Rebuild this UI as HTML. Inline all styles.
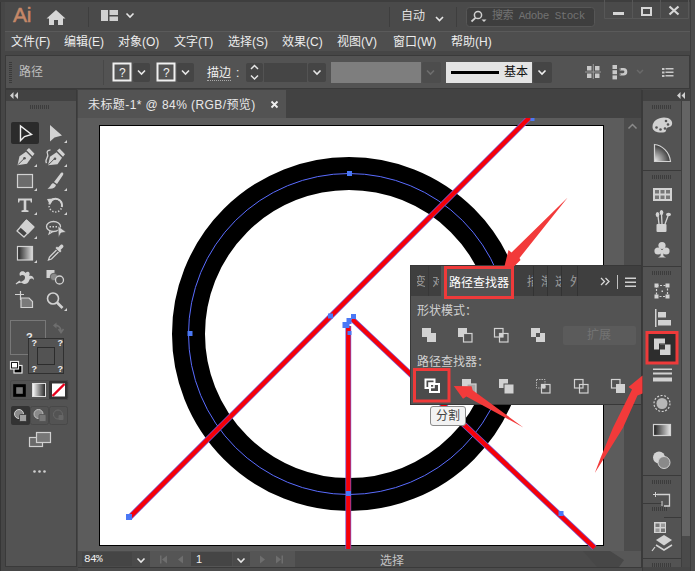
<!DOCTYPE html>
<html><head><meta charset="utf-8">
<style>
html,body{margin:0;padding:0;}
body{width:695px;height:571px;overflow:hidden;background:#535353;position:relative;font-family:"Liberation Sans","Noto Sans CJK SC",sans-serif;font-size:12px;color:#e6e6e6;}
.abs{position:absolute;}
.t{position:absolute;white-space:nowrap;line-height:1;}
svg{position:absolute;left:0;top:0;}
.dd{position:absolute;background:#474747;border-radius:2px;}
</style></head><body>

<div class="abs" style="left:0;top:0;width:695px;height:571px;background:#464646;"></div>
<div class="abs" style="left:0;top:0;width:1px;height:571px;background:#363636;"></div>
<div class="abs" style="left:0;top:0;width:695px;height:2px;background:#3e3e3e;"></div>
<div class="abs" id="topbar" style="left:5px;top:2px;width:685px;height:29px;background:#4a4a4a;"></div>
<div class="abs" style="left:5px;top:31px;width:685px;height:1px;background:#5a5a5a;"></div>
<div class="abs" id="menubar" style="left:5px;top:32px;width:685px;height:19px;background:#4e4e4e;"></div>
<div class="abs" id="ctrlbar" style="left:5px;top:55px;width:685px;height:34px;background:#535353;border:1px solid #3a3a3a;box-sizing:border-box;"></div>
<div class="abs" id="tabstrip" style="left:77px;top:89px;width:565px;height:29px;background:#424242;"></div>
<div class="abs" id="tab" style="left:78px;top:90px;width:208px;height:28px;background:#535353;"></div>
<div class="abs" id="lt-border" style="left:5px;top:89px;width:72px;height:478px;background:#3a3a3a;"></div>
<div class="abs" id="lt-head" style="left:6px;top:90px;width:70px;height:11px;background:#424242;"></div>
<div class="abs" id="lt" style="left:6px;top:101px;width:70px;height:465px;background:#535353;"></div>
<div class="abs" id="paste" style="left:78px;top:118px;width:546px;height:433px;background:#5c5c5c;"></div>
<div class="abs" id="art" style="left:99px;top:125px;width:505px;height:421px;background:#fff;border:1px solid #000;box-sizing:border-box;"></div>
<div class="abs" id="vscroll" style="left:624px;top:118px;width:17px;height:433px;background:#4c4c4c;"></div>
<div class="abs" id="status" style="left:78px;top:551px;width:564px;height:16px;background:#4b4b4b;"></div><div class="abs" style="left:150px;top:551px;width:145px;height:16px;background:#555;"></div><div class="abs" style="left:600px;top:551px;width:41px;height:16px;background:#575757;"></div>
<div class="abs" id="rd-head" style="left:643px;top:90px;width:47px;height:11px;background:#424242;"></div>
<div class="abs" id="rd" style="left:643px;top:101px;width:38px;height:466px;background:#535353;"></div>
<div class="abs" id="rd2" style="left:682px;top:101px;width:8px;height:435px;background:#646464;"></div>
<div class="abs" id="rd3" style="left:682px;top:536px;width:8px;height:31px;background:#4a4a4a;"></div>
<div class="abs" style="left:681px;top:101px;width:1px;height:466px;background:#3e3e3e;"></div>
<div class="abs" style="left:690px;top:0px;width:1px;height:571px;background:#3c3c3c;"></div>
<div class="abs" style="left:691px;top:0px;width:4px;height:571px;background:#4c4c4c;"></div>

<div class="t" style="left:13px;top:4px;font-size:21px;color:#c58868;letter-spacing:-0.3px;-webkit-text-stroke:0.5px #c58868;">Ai</div>
<svg width="695" height="60" viewBox="0 0 695 60">
 <!-- home -->
 <path d="M56 10 L46.5 18.5 L49 18.5 L49 25 L54 25 L54 20 L58 20 L58 25 L63 25 L63 18.5 L65.5 18.5 Z" fill="#d6d6d6"/>
 <rect x="88" y="7" width="1" height="20" fill="#3e3e3e"/>
 <!-- layout -->
 <rect x="101" y="10" width="7" height="11" fill="#d0d0d0"/><rect x="109.5" y="10" width="8.5" height="5" fill="#d0d0d0"/><rect x="109.5" y="16.5" width="8.5" height="4.5" fill="#d0d0d0"/>
 <path d="M126.5 13.5 L130 17 L133.5 13.5" fill="none" stroke="#e6e6e6" stroke-width="1.6"/>
 <rect x="389" y="7" width="1" height="20" fill="#3e3e3e"/>
 <path d="M436 17 L439.5 20.5 L443 17" fill="none" stroke="#e6e6e6" stroke-width="1.6"/>
 <rect x="456" y="7" width="1" height="20" fill="#3e3e3e"/>
 <rect x="466.500" y="7.500" width="128" height="19" rx="3" fill="#3e3e3e" stroke="#565656"/>
 <circle cx="478" cy="15" r="3.6" fill="none" stroke="#d0d0d0" stroke-width="1.5"/>
 <path d="M475.500 17.800 L471.500 21.500" stroke="#d0d0d0" stroke-width="1.8"/>
 <path d="M481.500 19.500 L486.500 19.500 L484 22 Z" fill="#d0d0d0"/>
 <!-- window controls -->
 <path d="M604.500 0 V18.500 H688.500 V0 M632.500 0 V18.500 M660.500 0 V18.500" fill="none" stroke="#575757"/>
 <rect x="613" y="12" width="11" height="3" fill="#d6d6d6"/>
 <rect x="642" y="8" width="9" height="7" fill="none" stroke="#d6d6d6" stroke-width="2"/>
 <path d="M669.500 6.500 L678.500 14.500 M678.500 6.500 L669.500 14.500" stroke="#d6d6d6" stroke-width="2.2"/>
</svg>
<div class="t" style="left:401px;top:10px;font-size:12px;color:#e0e0e0;">自动</div>
<div class="t" style="left:492px;top:11px;font-size:11px;color:#727272;font-family:'Liberation Mono','Noto Sans CJK SC',monospace;letter-spacing:-0.6px;">搜索 Adobe Stock</div>
<div class="t" style="left:11px;top:36px;font-size:12px;color:#ececec;">文件(F)</div><div class="t" style="left:64px;top:36px;font-size:12px;color:#ececec;">编辑(E)</div><div class="t" style="left:118px;top:36px;font-size:12px;color:#ececec;">对象(O)</div><div class="t" style="left:174px;top:36px;font-size:12px;color:#ececec;">文字(T)</div><div class="t" style="left:228px;top:36px;font-size:12px;color:#ececec;">选择(S)</div><div class="t" style="left:282px;top:36px;font-size:12px;color:#ececec;">效果(C)</div><div class="t" style="left:337px;top:36px;font-size:12px;color:#ececec;">视图(V)</div><div class="t" style="left:393px;top:36px;font-size:12px;color:#ececec;">窗口(W)</div><div class="t" style="left:451px;top:36px;font-size:12px;color:#ececec;">帮助(H)</div>
<svg width="695" height="95" viewBox="0 0 695 95">
 <rect x="9" y="62" width="3" height="1" fill="#3a3a3a"/><rect x="9" y="64" width="3" height="1" fill="#3a3a3a"/><rect x="9" y="66" width="3" height="1" fill="#3a3a3a"/><rect x="9" y="68" width="3" height="1" fill="#3a3a3a"/><rect x="9" y="70" width="3" height="1" fill="#3a3a3a"/><rect x="9" y="72" width="3" height="1" fill="#3a3a3a"/><rect x="9" y="74" width="3" height="1" fill="#3a3a3a"/><rect x="9" y="76" width="3" height="1" fill="#3a3a3a"/><rect x="9" y="78" width="3" height="1" fill="#3a3a3a"/><rect x="9" y="80" width="3" height="1" fill="#3a3a3a"/><rect x="9" y="82" width="3" height="1" fill="#3a3a3a"/>
 <rect x="103" y="60" width="1" height="25" fill="#484848"/>
 <!-- ? boxes -->
 <rect x="113.500" y="63.500" width="17" height="17" fill="#535353" stroke="#f0f0f0" stroke-width="2"/>
 <rect x="133" y="63" width="17" height="19" rx="2" fill="#454545"/>
 <path d="M138 70.500 L141.500 74 L145 70.500" fill="none" stroke="#e6e6e6" stroke-width="1.6"/>
 <rect x="157.500" y="63.500" width="17" height="17" fill="#535353" stroke="#f0f0f0" stroke-width="2"/>
 <rect x="177" y="63" width="17" height="19" rx="2" fill="#454545"/>
 <path d="M182 70.500 L185.500 74 L189 70.500" fill="none" stroke="#e6e6e6" stroke-width="1.6"/>
 <!-- stroke weight -->
 <rect x="246" y="63" width="17" height="19" rx="2" fill="#454545"/>
 <path d="M251 69 L254.500 65.500 L258 69 M251 75.500 L254.500 79 L258 75.500" fill="none" stroke="#e6e6e6" stroke-width="1.5"/>
 <rect x="264" y="63" width="43" height="19" fill="#454545"/>
 <rect x="308" y="63" width="18" height="19" rx="2" fill="#454545"/>
 <path d="M313.500 70.500 L317 74 L320.500 70.500" fill="none" stroke="#e6e6e6" stroke-width="1.6"/>
 <!-- var width profile -->
 <rect x="331" y="62" width="90" height="21" fill="#7e7e7e"/>
 <rect x="422" y="62" width="19" height="21" rx="2" fill="#4d4d4d"/>
 <path d="M427 70.500 L430.500 74 L434 70.500" fill="none" stroke="#6e6e6e" stroke-width="1.6"/>
 <!-- brush def -->
 <rect x="446" y="62" width="86" height="21" fill="#e4e4e4"/>
 <rect x="451" y="71" width="48" height="3" fill="#000"/>
 <rect x="533" y="62" width="19" height="21" rx="2" fill="#454545"/>
 <path d="M538.500 70.500 L542 74 L545.500 70.500" fill="none" stroke="#f0f0f0" stroke-width="1.6"/>
 <!-- right icons -->
 <g fill="#c8c8c8">
  <rect x="587" y="66" width="4.500" height="4.500"/><rect x="595" y="66" width="4.500" height="4.500"/><rect x="587" y="73.500" width="4.500" height="4.500"/><rect x="595" y="73.500" width="4.500" height="4.500"/>
  <rect x="592.800" y="64" width="1" height="15" fill="#9a9a9a"/><rect x="585" y="71.500" width="16" height="1" fill="#9a9a9a"/>
  <rect x="612.500" y="65" width="4.500" height="4"/><rect x="612.500" y="70.200" width="4.500" height="4"/><rect x="612.500" y="75.400" width="4.500" height="4"/>
  <path d="M620 68 H623.500 A3.700 3.700 0 0 1 623.500 75.600 H620 V73.200 H623 A1.300 1.300 0 0 0 623 70.400 H620 Z"/><rect x="619.500" y="68" width="1.500" height="2.400" fill="#8a8a8a"/><rect x="619.500" y="73.200" width="1.500" height="2.400" fill="#8a8a8a"/>
  <rect x="662" y="68" width="2.500" height="2"/><rect x="662" y="71.500" width="2.500" height="2"/><rect x="662" y="75" width="2.500" height="2"/>
  <rect x="665.500" y="68" width="8" height="1.500"/><rect x="665.500" y="71.500" width="8" height="1.500"/><rect x="665.500" y="75" width="8" height="1.500"/>
 </g>
 <path d="M637 70 L640 73 L643 70" fill="none" stroke="#6a6a6a" stroke-width="1.5"/>
</svg>
<div class="t" style="left:19px;top:66px;font-size:12px;color:#bdbdbd;">路径</div>
<div class="t" style="left:119px;top:67px;font-size:12px;color:#f0f0f0;">?</div>
<div class="t" style="left:163px;top:67px;font-size:12px;color:#f0f0f0;">?</div>
<div class="t" style="left:207px;top:67px;font-size:12px;color:#f0f0f0;border-bottom:1px dotted #aaa;padding-bottom:1px;">描边</div>
<div class="t" style="left:236px;top:67px;font-size:12px;color:#f0f0f0;">:</div>
<div class="t" style="left:504px;top:66px;font-size:12px;color:#111;">基本</div>

<div class="t" style="left:88px;top:99px;font-size:12px;color:#e8e8e8;letter-spacing:0.42px;">未标题-1* @ 84% (RGB/预览)</div>
<svg width="695" height="130" viewBox="0 0 695 130">
 <path d="M271.500 101.500 L277.500 107.500 M277.500 101.500 L271.500 107.500" stroke="#f0f0f0" stroke-width="1.8"/>
 <path d="M13.500 92 L10 95.500 L13.500 99 Z M18 92 L14.500 95.500 L18 99 Z" fill="#d0d0d0"/>
 <path d="M680.500 92 L677 95.500 L680.500 99 Z M685 92 L681.500 95.500 L685 99 Z" fill="#d0d0d0"/>
</svg>

<svg width="695" height="571" viewBox="0 0 695 571">
 <defs><clipPath id="cv"><rect x="78" y="118" width="546" height="433"/></clipPath></defs>
 <g clip-path="url(#cv)">
  <circle cx="349" cy="334" r="160.500" fill="none" stroke="#000" stroke-width="33"/>
  <circle cx="349" cy="334" r="160.500" fill="none" stroke="#5a6cff" stroke-width="1"/>
  <g stroke="#7a55d0" stroke-width="5.800">
   <line x1="129" y1="518" x2="531" y2="116"/>
   <line x1="348.300" y1="326" x2="348.300" y2="549"/>
   <line x1="352" y1="319" x2="594.500" y2="547.700"/>
  </g>
  <g stroke="#f60008" stroke-width="4.300">
   <line x1="129" y1="518" x2="531" y2="116"/>
   <line x1="348.300" y1="326" x2="348.300" y2="549"/>
   <line x1="352" y1="319" x2="594.500" y2="547.700"/>
  </g>
  <g fill="#4a78f5">
   <rect x="126" y="514" width="6" height="6"/><rect x="530.500" y="118" width="4" height="3"/>
   <rect x="328" y="313.500" width="5" height="5"/>
   <rect x="342.500" y="322" width="7" height="6"/>
   <rect x="346.500" y="318" width="5" height="6"/>
   <rect x="351" y="314" width="5" height="5"/>
   <rect x="347.500" y="331" width="4" height="4"/>
   <rect x="346" y="491" width="5" height="5"/>
   <rect x="187.500" y="331" width="5" height="5"/>
   <rect x="347" y="171" width="5" height="5"/>
   <rect x="558.500" y="511" width="5" height="5"/>
  </g>
 </g>
 <!-- scroll arrow -->
 <path d="M628.500 128.500 L632.500 124.500 L636.500 128.500" fill="none" stroke="#8a8a8a" stroke-width="1.5"/>
</svg>
<svg width="80" height="571" viewBox="0 0 80 571"><rect x="30" y="105" width="1" height="4" fill="#3c3c3c"/><rect x="32" y="105" width="1" height="4" fill="#3c3c3c"/><rect x="34" y="105" width="1" height="4" fill="#3c3c3c"/><rect x="36" y="105" width="1" height="4" fill="#3c3c3c"/><rect x="38" y="105" width="1" height="4" fill="#3c3c3c"/><rect x="40" y="105" width="1" height="4" fill="#3c3c3c"/><rect x="42" y="105" width="1" height="4" fill="#3c3c3c"/><rect x="44" y="105" width="1" height="4" fill="#3c3c3c"/><rect x="46" y="105" width="1" height="4" fill="#3c3c3c"/><rect x="48" y="105" width="1" height="4" fill="#3c3c3c"/><rect x="11" y="122" width="28" height="22" rx="2" fill="#2b2b2b"/><path d="M20.500 126 L20.500 140.500 L24.500 136.500 L31.500 134.500 Z" fill="none" stroke="#f0f0f0" stroke-width="1.400" stroke-linejoin="miter"/><path d="M50 125 L50 141.500 L54.500 137.500 L62 135.500 Z" fill="#d2d2d2"/><path d="M67 143 L67 140 L64 143 Z" fill="#d2d2d2"/><g transform="translate(0,1.200)"><path d="M17.500 164 L19.500 155 L26 150.500 L31.500 156 L27 162.500 Z" fill="#d2d2d2"/><path d="M26.500 149 L29 146.800 L34.500 152.500 L32.500 155 Z" fill="#d2d2d2"/><path d="M18 163.500 L24 157.500" stroke="#535353" stroke-width="1"/><circle cx="24.500" cy="157" r="1.300" fill="#535353"/></g><path d="M37 167 L37 164 L34 167 Z" fill="#d2d2d2"/><g transform="translate(0,1.200)"><path d="M48 164 L50 155.500 L56.500 151 L62 156.500 L57.500 163 Z" fill="#d2d2d2"/><path d="M57 149.500 L59.500 147.300 L65 153 L63 155.500 Z" fill="#d2d2d2"/><path d="M48.500 163.500 L54.500 157.500" stroke="#535353" stroke-width="1"/><circle cx="55" cy="157.500" r="1.300" fill="#535353"/><path d="M46.500 162 C44 158 49.500 156 47.500 152.500 C46 150 49 148.500 50.500 149" fill="none" stroke="#d2d2d2" stroke-width="1.300"/></g><path d="M67 167 L67 164 L64 167 Z" fill="#d2d2d2"/><rect x="17.500" y="174.500" width="15" height="13" fill="#6c6c6c" stroke="#d2d2d2" stroke-width="1.200"/><path d="M37 191 L37 188 L34 191 Z" fill="#d2d2d2"/><path d="M62.500 172.500 C63.500 173 63.500 174 63 175 L57 184 L54 182 L60.500 173.500 C61 172.500 62 172.300 62.500 172.500 Z" fill="#d2d2d2"/><path d="M53 183 L56 185 C55.500 188 52 189.500 47.500 188.500 C50 187.500 50.500 184.500 53 183 Z" fill="#d2d2d2"/><path d="M67 191 L67 188 L64 191 Z" fill="#d2d2d2"/><path d="M18 198.500 H32 V202.500 H30.800 L30.300 200.500 H26.300 V210 L28.500 210.600 V212 H21.500 V210.600 L23.700 210 V200.500 H19.700 L19.200 202.500 H18 Z" fill="#d2d2d2"/><path d="M37 215 L37 212 L34 215 Z" fill="#d2d2d2"/><circle cx="55.500" cy="205.500" r="6.500" fill="none" stroke="#d2d2d2" stroke-width="1.500" stroke-dasharray="1.300 1.700"/><path d="M49.600 202.600 A6.500 6.500 0 0 1 61.800 207" fill="none" stroke="#d2d2d2" stroke-width="2"/><path d="M47 199 L54 198.500 L50 205 Z" fill="#d2d2d2"/><path d="M67 215 L67 212 L64 215 Z" fill="#d2d2d2"/><path d="M26.500 220.300 L33.800 227 L24 237 L17 231 Z" fill="#444" stroke="#d2d2d2" stroke-width="1.300" stroke-linejoin="round"/><path d="M26.500 220.300 L33.800 227 L27.800 233.200 L20.500 226.800 Z" fill="#d2d2d2" stroke="#d2d2d2" stroke-width="1.300" stroke-linejoin="round"/><path d="M37 239 L37 236 L34 239 Z" fill="#d2d2d2"/><ellipse cx="53.500" cy="226.500" rx="7" ry="5" fill="none" stroke="#d2d2d2" stroke-width="1.300"/><path d="M50 231 L49 234 L53 231.500" fill="none" stroke="#d2d2d2" stroke-width="1.100"/><rect x="49.500" y="226" width="1.500" height="1.500" fill="#d2d2d2"/><rect x="52.500" y="226" width="1.500" height="1.500" fill="#d2d2d2"/><rect x="55.500" y="226" width="1.500" height="1.500" fill="#d2d2d2"/><path d="M58 226 L66 232 L61 233 L58.500 237.500 Z" fill="#d2d2d2" stroke="#535353" stroke-width="0.600"/><defs><linearGradient id="g1" x1="0" x2="1"><stop offset="0" stop-color="#222"/><stop offset="1" stop-color="#ddd"/></linearGradient></defs><rect x="17.500" y="246.500" width="15" height="13.500" fill="url(#g1)" stroke="#d2d2d2" stroke-width="1.200"/><path d="M37 263 L37 260 L34 263 Z" fill="#d2d2d2"/><path d="M60.500 245 C62 243.500 64.500 246 63 247.500 L60.500 250 L61.500 251 L60 252.500 L55.500 248 L57 246.500 L58 247.500 Z" fill="#d2d2d2"/><path d="M56.500 250 L49.500 257 L48.500 260 L51.500 259 L58.500 252" fill="none" stroke="#d2d2d2" stroke-width="1.300"/><path d="M17 283 C20 279 24 283 25 278 C25.500 275 22 274 20 276 C18 271 24 270 25.500 273 C28 270 31 273 29 276 C32 275 34 277 34 280 C32 278 30 278 29 281 C28 284 24 285 22 283 C20 282 19 284 17 283 Z" fill="#d2d2d2"/><circle cx="21" cy="280" r="1.800" fill="#535353"/><path d="M16 284 L20 281" stroke="#d2d2d2" stroke-width="1.200"/><rect x="46.500" y="270" width="8" height="8" fill="#d2d2d2"/><circle cx="54" cy="277" r="3.800" fill="#8a8a8a" stroke="#535353" stroke-width="0.800"/><circle cx="59.500" cy="280" r="4" fill="#535353" stroke="#d2d2d2" stroke-width="1.300"/><path d="M20.500 291 V300 M15 294.500 H24" stroke="#d2d2d2" stroke-width="1.200" fill="none"/><path d="M21 298 H29 L32.500 301.500 V307.500 H21 Z" fill="#7a7a7a" stroke="#d2d2d2" stroke-width="1.200"/><circle cx="53" cy="298.500" r="5.500" fill="none" stroke="#d2d2d2" stroke-width="1.600"/><path d="M57 302.500 L62.500 308" stroke="#d2d2d2" stroke-width="2.600"/><path d="M67 311 L67 308 L64 311 Z" fill="#d2d2d2"/><rect x="10.500" y="320.500" width="35" height="34" fill="#535353" stroke="#787878"/><rect x="28.500" y="338.500" width="35" height="35" fill="#535353" stroke="#303030"/><rect x="37.500" y="347.500" width="17" height="17" fill="#535353" stroke="#2c2c2c"/><path d="M54 325.500 C58 325 61 327 61 331 M58.500 329 L61 332.500 L63.500 329" fill="none" stroke="#6e6e6e" stroke-width="1.600"/><path d="M56.500 322.500 L53 325.500 L56.500 328.500 Z" fill="#6e6e6e"/><rect x="14" y="365.500" width="8" height="7.500" fill="#000" stroke="#e8e8e8" stroke-width="1.200"/><rect x="10.500" y="361.500" width="8" height="7.500" fill="#000" stroke="#e8e8e8" stroke-width="1.200"/><rect x="12" y="363" width="5" height="4.500" fill="#fff"/><rect x="49" y="380" width="19" height="20" rx="2" fill="#333"/><rect x="14.700" y="385.700" width="9.600" height="9.600" fill="#777" stroke="#000" stroke-width="3"/><rect x="10.500" y="380.500" width="57.500" height="19" rx="2" fill="none" stroke="#4a4a4a" stroke-width="1"/><defs><linearGradient id="g2" x1="0" x2="1"><stop offset="0" stop-color="#fff"/><stop offset="1" stop-color="#222"/></linearGradient></defs><rect x="32.500" y="383.500" width="13" height="13" fill="url(#g2)" stroke="#ddd"/><rect x="52" y="383.500" width="13" height="13" fill="#fff"/><path d="M52.500 396 L64.500 384" stroke="#e8001c" stroke-width="2.400"/><rect x="11" y="406" width="19" height="19" rx="2" fill="#333"/><rect x="30.500" y="406.500" width="18" height="18" rx="2" fill="none" stroke="#484848"/><rect x="49.500" y="406.500" width="18" height="18" rx="2" fill="none" stroke="#484848"/><circle cx="19" cy="414" r="4.500" fill="#8a8a8a" stroke="#d0d0d0"/><rect x="19.500" y="414.500" width="7" height="7" rx="1" fill="#a0a0a0" stroke="#333" stroke-width="0.800"/><circle cx="38.500" cy="414" r="4.500" fill="#8a8a8a" stroke="#c0c0c0"/><rect x="39" y="414.500" width="7" height="7" rx="1" fill="#777" stroke="#535353" stroke-width="0.800"/><circle cx="58" cy="414.500" r="4.500" fill="none" stroke="#686868"/><rect x="58.500" y="415" width="5" height="5" rx="1" fill="#666"/><rect x="29.500" y="437.500" width="13" height="9" fill="#6a6a6a" stroke="#d0d0d0" stroke-width="1.200"/><rect x="36.500" y="432.500" width="14" height="10" fill="#777" stroke="#d0d0d0" stroke-width="1.200"/><circle cx="34.500" cy="471.500" r="1.300" fill="#d0d0d0"/><circle cx="39.500" cy="471.500" r="1.300" fill="#d0d0d0"/><circle cx="44.500" cy="471.500" r="1.300" fill="#d0d0d0"/></svg><div class="abs" style="left:24px;top:330px;width:10px;height:8px;overflow:hidden;"><div class="t" style="left:2px;top:2px;font-size:11px;font-weight:bold;color:#e8e8e8;">?</div></div><div class="t" style="left:31.5px;top:339px;font-size:9px;font-weight:bold;color:#ececec;">?</div><div class="t" style="left:57.5px;top:339px;font-size:9px;font-weight:bold;color:#ececec;">?</div><div class="t" style="left:31.5px;top:364.5px;font-size:9px;font-weight:bold;color:#ececec;">?</div><div class="t" style="left:57.5px;top:364.5px;font-size:9px;font-weight:bold;color:#ececec;">?</div><svg width="695" height="571" viewBox="0 0 695 571"><defs><linearGradient id="g3" x1="0" x2="1"><stop offset="0" stop-color="#1a1a1a"/><stop offset="1" stop-color="#e8e8e8"/></linearGradient><radialGradient id="g4" cx="0" cy="1" r="1.1"><stop offset="0" stop-color="#f0f0f0"/><stop offset="0.500" stop-color="#888"/><stop offset="1" stop-color="#222"/></radialGradient></defs><rect x="641" y="90" width="2" height="481" fill="#3a3a3a"/><rect x="652" y="105" width="1" height="4" fill="#3c3c3c"/><rect x="654" y="105" width="1" height="4" fill="#3c3c3c"/><rect x="656" y="105" width="1" height="4" fill="#3c3c3c"/><rect x="658" y="105" width="1" height="4" fill="#3c3c3c"/><rect x="660" y="105" width="1" height="4" fill="#3c3c3c"/><rect x="662" y="105" width="1" height="4" fill="#3c3c3c"/><rect x="664" y="105" width="1" height="4" fill="#3c3c3c"/><rect x="666" y="105" width="1" height="4" fill="#3c3c3c"/><rect x="668" y="105" width="1" height="4" fill="#3c3c3c"/><rect x="670" y="105" width="1" height="4" fill="#3c3c3c"/><rect x="643" y="170" width="38" height="1" fill="#3a3a3a"/><rect x="652" y="175" width="1" height="4" fill="#3c3c3c"/><rect x="654" y="175" width="1" height="4" fill="#3c3c3c"/><rect x="656" y="175" width="1" height="4" fill="#3c3c3c"/><rect x="658" y="175" width="1" height="4" fill="#3c3c3c"/><rect x="660" y="175" width="1" height="4" fill="#3c3c3c"/><rect x="662" y="175" width="1" height="4" fill="#3c3c3c"/><rect x="664" y="175" width="1" height="4" fill="#3c3c3c"/><rect x="666" y="175" width="1" height="4" fill="#3c3c3c"/><rect x="668" y="175" width="1" height="4" fill="#3c3c3c"/><rect x="670" y="175" width="1" height="4" fill="#3c3c3c"/><rect x="643" y="266" width="38" height="1" fill="#3a3a3a"/><rect x="652" y="271" width="1" height="4" fill="#3c3c3c"/><rect x="654" y="271" width="1" height="4" fill="#3c3c3c"/><rect x="656" y="271" width="1" height="4" fill="#3c3c3c"/><rect x="658" y="271" width="1" height="4" fill="#3c3c3c"/><rect x="660" y="271" width="1" height="4" fill="#3c3c3c"/><rect x="662" y="271" width="1" height="4" fill="#3c3c3c"/><rect x="664" y="271" width="1" height="4" fill="#3c3c3c"/><rect x="666" y="271" width="1" height="4" fill="#3c3c3c"/><rect x="668" y="271" width="1" height="4" fill="#3c3c3c"/><rect x="670" y="271" width="1" height="4" fill="#3c3c3c"/><rect x="643" y="475" width="38" height="1" fill="#3a3a3a"/><rect x="652" y="480" width="1" height="4" fill="#3c3c3c"/><rect x="654" y="480" width="1" height="4" fill="#3c3c3c"/><rect x="656" y="480" width="1" height="4" fill="#3c3c3c"/><rect x="658" y="480" width="1" height="4" fill="#3c3c3c"/><rect x="660" y="480" width="1" height="4" fill="#3c3c3c"/><rect x="662" y="480" width="1" height="4" fill="#3c3c3c"/><rect x="664" y="480" width="1" height="4" fill="#3c3c3c"/><rect x="666" y="480" width="1" height="4" fill="#3c3c3c"/><rect x="668" y="480" width="1" height="4" fill="#3c3c3c"/><rect x="670" y="480" width="1" height="4" fill="#3c3c3c"/><rect x="642" y="503" width="20" height="1" fill="#3a3a3a"/><rect x="652" y="507" width="1" height="4" fill="#3c3c3c"/><rect x="654" y="507" width="1" height="4" fill="#3c3c3c"/><rect x="656" y="507" width="1" height="4" fill="#3c3c3c"/><rect x="658" y="507" width="1" height="4" fill="#3c3c3c"/><rect x="660" y="507" width="1" height="4" fill="#3c3c3c"/><rect x="662" y="507" width="1" height="4" fill="#3c3c3c"/><rect x="664" y="507" width="1" height="4" fill="#3c3c3c"/><rect x="666" y="507" width="1" height="4" fill="#3c3c3c"/><rect x="664" y="517" width="17" height="1" fill="#3a3a3a"/><rect x="643" y="558" width="38" height="1" fill="#3a3a3a"/><rect x="652" y="563" width="1" height="4" fill="#3c3c3c"/><rect x="654" y="563" width="1" height="4" fill="#3c3c3c"/><rect x="656" y="563" width="1" height="4" fill="#3c3c3c"/><rect x="658" y="563" width="1" height="4" fill="#3c3c3c"/><rect x="660" y="563" width="1" height="4" fill="#3c3c3c"/><rect x="662" y="563" width="1" height="4" fill="#3c3c3c"/><rect x="664" y="563" width="1" height="4" fill="#3c3c3c"/><rect x="666" y="563" width="1" height="4" fill="#3c3c3c"/><rect x="668" y="563" width="1" height="4" fill="#3c3c3c"/><rect x="670" y="563" width="1" height="4" fill="#3c3c3c"/><path d="M652.500 127 C652.500 121 658 117.500 664 117.500 C670 117.500 673 121 672 124.500 C671 128 667.500 126.500 666.500 128.500 C665.500 130.500 667 132 663 132.500 C657 133 652.500 131 652.500 127 Z" fill="#d2d2d2"/><circle cx="656.5" cy="127.5" r="1.300" fill="#535353"/><circle cx="660.5" cy="129.5" r="1.300" fill="#535353"/><circle cx="665" cy="128.5" r="1.300" fill="#535353"/><circle cx="668" cy="124.5" r="1.300" fill="#535353"/><circle cx="666" cy="121" r="1.300" fill="#535353"/><path d="M654.500 144.500 C662 145 669.500 152 670.500 161.500 L654.500 161.500 Z" fill="url(#g4)" stroke="#d2d2d2" stroke-width="1.200"/><rect x="653" y="188" width="19" height="13" fill="#d2d2d2"/><rect x="655" y="190" width="4" height="3.500" fill="#777"/><rect x="660.5" y="190" width="4" height="3.500" fill="#777"/><rect x="666" y="190" width="4" height="3.500" fill="#777"/><rect x="655" y="195.5" width="4" height="3.500" fill="#777"/><rect x="660.5" y="195.5" width="4" height="3.500" fill="#777"/><rect x="666" y="195.5" width="4" height="3.500" fill="#777"/><rect x="656.500" y="224" width="10" height="8" rx="1" fill="#d2d2d2"/><path d="M659 224 L658 216 M662 224 L661.500 214 M665 224 L668 216" stroke="#d2d2d2" stroke-width="1.300"/><ellipse cx="657.500" cy="214.500" rx="1.800" ry="2.500" fill="#d2d2d2"/><ellipse cx="661.500" cy="212.500" rx="1.800" ry="2.500" fill="#d2d2d2"/><ellipse cx="668.500" cy="214.500" rx="2.500" ry="1.800" fill="#d2d2d2"/><circle cx="662" cy="245.500" r="3.600" fill="#d2d2d2"/><circle cx="658" cy="251" r="3.600" fill="#d2d2d2"/><circle cx="666" cy="251" r="3.600" fill="#d2d2d2"/><path d="M661 250 H663 L663.500 256 L666 257.500 H658 L660.500 256 Z" fill="#d2d2d2"/><rect x="656.500" y="285.500" width="11" height="11" fill="none" stroke="#d2d2d2" stroke-width="1.200" stroke-dasharray="2 1.500"/><rect x="654.5" y="283.5" width="4" height="4" fill="#d2d2d2"/><rect x="665.5" y="283.5" width="4" height="4" fill="#d2d2d2"/><rect x="654.5" y="294.5" width="4" height="4" fill="#d2d2d2"/><rect x="665.5" y="294.5" width="4" height="4" fill="#d2d2d2"/><rect x="661.500" y="290.500" width="1.500" height="1.500" fill="#d2d2d2"/><rect x="655" y="309" width="1.500" height="18" fill="#d2d2d2"/><rect x="658" y="312" width="8" height="5.500" fill="#d2d2d2"/><rect x="658" y="320" width="13" height="5.500" fill="#d2d2d2"/><rect x="648" y="334" width="28" height="28" fill="#2d2d2d"/><rect x="654" y="338.500" width="11" height="11" fill="#d2d2d2"/><rect x="659.500" y="344" width="11.500" height="11.500" fill="#d2d2d2" stroke="#2d2d2d" stroke-width="1"/><rect x="660" y="344.500" width="5" height="5" fill="#3a3a3a"/><rect x="653" y="368.500" width="19" height="1.500" fill="#d2d2d2"/><rect x="653" y="372.500" width="19" height="2" fill="#d2d2d2"/><rect x="653" y="377.500" width="19" height="4" fill="#d2d2d2"/><circle cx="662" cy="403.500" r="5.500" fill="#b8b8b8"/><circle cx="662" cy="403.500" r="8" fill="none" stroke="#d2d2d2" stroke-width="1.200" stroke-dasharray="2 1.600"/><rect x="653.500" y="424.500" width="17" height="11" fill="url(#g3)" stroke="#d2d2d2" stroke-width="1.200"/><circle cx="659" cy="457.500" r="6" fill="#d2d2d2"/><circle cx="664" cy="462.500" r="6" fill="#8a8a8a" stroke="#d2d2d2" stroke-width="1"/><path d="M657 494.500 H669.500 V506 H664" fill="none" stroke="#d2d2d2" stroke-width="1.300"/><path d="M655.500 492 V497 M653 494.500 H658 M662 501 V506" stroke="#d2d2d2" stroke-width="1"/><rect x="654" y="522" width="12" height="11" fill="#d2d2d2"/><rect x="655.500" y="523.500" width="4" height="3.500" fill="#777"/><rect x="661" y="523.500" width="4" height="3.500" fill="#999"/><rect x="655.500" y="528.500" width="4" height="3.500" fill="#999"/><rect x="661" y="528.500" width="4" height="3.500" fill="#777"/><path d="M664 535 L672 540 L664 545.500 L656 540 Z" fill="#d2d2d2"/><path d="M656 545 L664 550 L672 545" fill="none" stroke="#d2d2d2" stroke-width="1.500"/><path d="M652 551 L655 547" stroke="#d2d2d2" stroke-width="1.200"/></svg><svg width="695" height="571" viewBox="0 0 695 571"><rect x="82" y="552" width="50" height="14" fill="#454545"/><rect x="132.500" y="552" width="17.500" height="14" fill="#4a4a4a"/><rect x="191" y="552" width="41" height="14" fill="#454545"/><rect x="232.500" y="552" width="17.500" height="14" fill="#4a4a4a"/><path d="M137.500 558.500 L141 562 L144.500 558.500" fill="none" stroke="#e6e6e6" stroke-width="1.600"/><path d="M237.500 558.500 L241 562 L244.500 558.500" fill="none" stroke="#e6e6e6" stroke-width="1.600"/><rect x="160" y="555.500" width="1.500" height="8" fill="#6e6e6e"/><path d="M167 555.500 L162 559.500 L167 563.500 Z" fill="#6e6e6e"/><path d="M183 555.500 L178 559.500 L183 563.500 Z" fill="#6e6e6e"/><path d="M260 555.500 L265 559.500 L260 563.500 Z" fill="#6e6e6e"/><path d="M276 555.500 L281 559.500 L276 563.500 Z" fill="#6e6e6e"/><rect x="281.500" y="555.500" width="1.500" height="8" fill="#6e6e6e"/><rect x="78" y="567" width="564" height="1" fill="#3a3a3a"/><rect x="78" y="568" width="564" height="3" fill="#4c4c4c"/><path d="M583 551 L610 551 L624 560 L619 567 L597 567 Z" fill="#474747"/></svg><div class="t" style="left:84px;top:554px;font-size:11px;color:#f0f0f0;font-family:'Liberation Mono',monospace;letter-spacing:-0.6px;">84%</div><div class="t" style="left:196px;top:554px;font-size:11px;color:#f0f0f0;">1</div><div class="t" style="left:380px;top:554.5px;font-size:12px;color:#c4c4c4;">选择</div>
<div class="abs" id="pf" style="left:410px;top:265px;width:232px;height:140px;background:#535353;border:1px solid #383838;box-sizing:border-box;"></div>
<div class="abs" id="pf-head" style="left:411px;top:266px;width:230px;height:30px;background:#3f3f3f;"></div>
<div class="abs" id="pf-tab" style="left:441px;top:266px;width:73px;height:30px;background:#535353;"></div>
<div class="abs" style="left:417px;top:274px;width:8px;height:16px;overflow:hidden;"><div class="t" style="left:-3px;top:2px;font-size:12px;color:#9c9c9c;">变换</div></div>
<div class="abs" style="left:433px;top:274px;width:6px;height:16px;overflow:hidden;"><div class="t" style="left:-1px;top:2px;font-size:12px;color:#9c9c9c;">对齐</div></div>
<div class="abs" style="left:428px;top:266px;width:1px;height:30px;background:#383838;"></div>
<div class="abs" style="left:533px;top:266px;width:1px;height:30px;background:#333;"></div>
<div class="abs" style="left:547px;top:266px;width:1px;height:30px;background:#333;"></div>
<div class="abs" style="left:561px;top:266px;width:1px;height:30px;background:#333;"></div>
<div class="abs" style="left:577px;top:266px;width:1px;height:30px;background:#333;"></div>
<div class="abs" style="left:527px;top:274px;width:6px;height:16px;overflow:hidden;"><div class="t" style="left:0px;top:2px;font-size:12px;color:#9a9a9a;">描边</div></div>
<div class="abs" style="left:541px;top:274px;width:6px;height:16px;overflow:hidden;"><div class="t" style="left:0px;top:2px;font-size:12px;color:#9a9a9a;">渐变</div></div>
<div class="abs" style="left:555px;top:274px;width:6px;height:16px;overflow:hidden;"><div class="t" style="left:0px;top:2px;font-size:12px;color:#9a9a9a;">透明</div></div>
<div class="abs" style="left:570px;top:274px;width:7px;height:16px;overflow:hidden;"><div class="t" style="left:0px;top:2px;font-size:12px;color:#9a9a9a;">外观</div></div>
<div class="t" style="left:449px;top:277px;font-size:12px;color:#fff;">路径查找器</div>
<div class="t" style="left:417px;top:305px;font-size:12px;color:#d0d0d0;">形状模式：</div>
<div class="t" style="left:417px;top:356px;font-size:12px;color:#d0d0d0;">路径查找器：</div>
<div class="abs" style="left:563px;top:326px;width:73px;height:19px;background:#5b5b5b;border-radius:2px;"></div>
<div class="t" style="left:587px;top:329px;font-size:12px;color:#737373;">扩展</div>
<svg width="695" height="571" viewBox="0 0 695 571">
 <path d="M601 278 L604.500 281.500 L601 285 M605.500 278 L609 281.500 L605.500 285" fill="none" stroke="#d8d8d8" stroke-width="1.300"/>
 <rect x="617" y="275" width="1" height="14" fill="#c0c0c0"/>
 <rect x="625" y="277.500" width="11" height="1.500" fill="#d0d0d0"/><rect x="625" y="281.500" width="11" height="1.500" fill="#d0d0d0"/><rect x="625" y="285.500" width="11" height="1.500" fill="#d0d0d0"/>
 <!-- row1 icons: centres 429,465,501,538 y=335 -->
 <g>
  <rect x="422" y="328" width="9" height="9" fill="#d2d2d2"/><rect x="427" y="333" width="9" height="9" fill="#d2d2d2"/>
  <rect x="458" y="328" width="9" height="9" fill="#d2d2d2"/><rect x="463.500" y="333.500" width="8.500" height="8.500" fill="#535353" stroke="#d2d2d2" stroke-width="1.200"/>
  <rect x="494.500" y="328.500" width="8.500" height="8.500" fill="none" stroke="#d2d2d2" stroke-width="1.200"/><rect x="499.500" y="333.500" width="8.500" height="8.500" fill="none" stroke="#d2d2d2" stroke-width="1.200"/><rect x="499.500" y="333.500" width="3.500" height="3.500" fill="#d2d2d2"/>
  <rect x="531" y="328" width="9" height="9" fill="#d2d2d2"/><rect x="536" y="333" width="9" height="9" fill="#d2d2d2"/><rect x="536" y="333" width="4" height="4" fill="#535353"/>
 </g>
 <!-- row2: centres 432,469,506,543,581,618 y=386 -->
 <g>
  <rect x="415" y="370" width="34" height="31" fill="#4b4b4b" stroke="#6e6e6e"/>
  <rect x="425.500" y="379.500" width="9" height="8.500" fill="none" stroke="#fff" stroke-width="2"/><rect x="430" y="384" width="9" height="8" fill="#4b4b4b" stroke="#fff" stroke-width="2"/><rect x="429" y="383" width="5" height="4.500" fill="none" stroke="#fff" stroke-width="1.600"/>
  <rect x="462" y="379" width="9" height="9" fill="#d2d2d2"/><rect x="467" y="384" width="9" height="9" fill="#a8a8a8" stroke="#d2d2d2" stroke-width="1.200"/>
  <rect x="499" y="379" width="9" height="9" fill="#d2d2d2"/><rect x="504" y="384" width="10" height="10" fill="#d2d2d2" stroke="#535353" stroke-width="1"/>
  <rect x="536.500" y="379.500" width="8.500" height="8.500" fill="none" stroke="#b0b0b0" stroke-width="1" stroke-dasharray="1.500 1"/><rect x="541.500" y="384.500" width="8.500" height="8.500" fill="none" stroke="#d2d2d2" stroke-width="1.200"/><rect x="541.500" y="384.500" width="4" height="4" fill="#d2d2d2"/>
  <rect x="574.500" y="379.500" width="8.500" height="8.500" fill="none" stroke="#d2d2d2" stroke-width="1.200"/><rect x="579.500" y="384.500" width="8.500" height="8.500" fill="none" stroke="#d2d2d2" stroke-width="1.200"/>
  <rect x="611.500" y="379.500" width="8.500" height="8.500" fill="none" stroke="#d2d2d2" stroke-width="1.200"/><rect x="616" y="384" width="9" height="9" fill="#d2d2d2"/>
 </g>
</svg>
<!-- tooltip -->
<div class="abs" style="left:430px;top:406px;width:36px;height:20px;background:#f2f2f2;border:1px solid #8a8a8a;border-radius:3px;box-sizing:border-box;"></div>
<div class="t" style="left:436px;top:410px;font-size:12px;color:#444;">分割</div>

<svg width="695" height="571" viewBox="0 0 695 571">
 <g fill="none" stroke="#ee3a3a" stroke-width="3">
  <rect x="445.500" y="267.500" width="67" height="30"/>
  <rect x="414.500" y="369.500" width="34.500" height="31.500"/>
  <rect x="647" y="332.500" width="30" height="30.500"/>
 </g>
 <g fill="#f23a3a">
  <path d="M567.700 197.400 L511.500 252.500 L508.500 250 L504.500 266 L514.500 266 L520.500 260 L519.500 258 Z"/>
  <path d="M642.500 375.400 L628.500 387 L632 389.500 L613 427.800 L601 456.700 L594.800 473 L605 456.700 L623 427.800 L637.500 395.500 L642.500 393.500 Z"/>
  <path d="M453.800 385.900 L471.600 386.200 L472.700 390.300 L523.400 427.400 L466.400 396.500 L463 398.800 Z"/>
 </g>
</svg>
</body></html>
